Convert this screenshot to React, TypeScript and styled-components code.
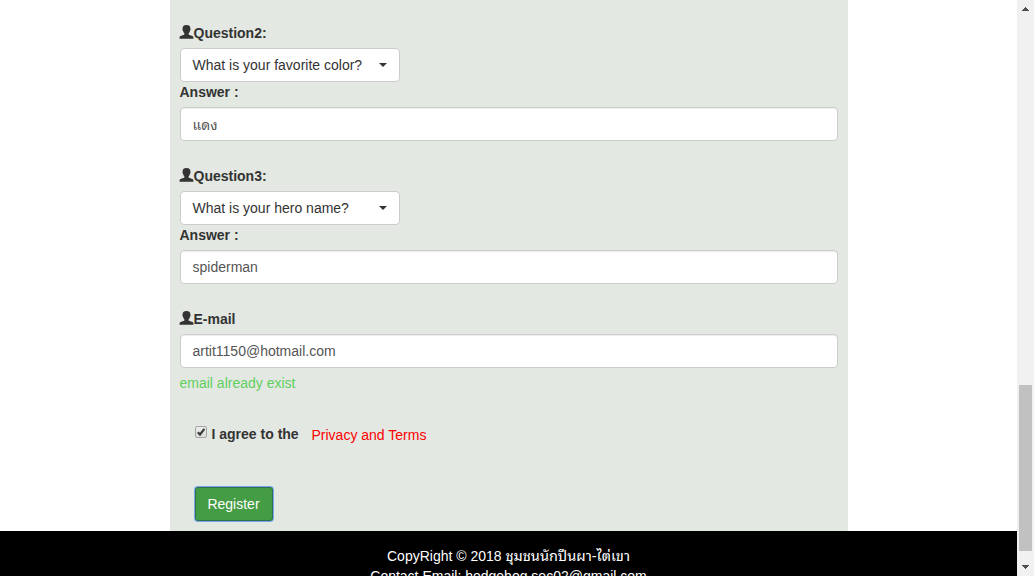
import React from 'react';
import styled, { createGlobalStyle } from 'styled-components';

const GlobalStyle = createGlobalStyle`
  *, *::before, *::after { box-sizing: border-box; }
  html, body { margin: 0; overflow: hidden; background: #fff; }
  body, button, input {
    font-family: "Liberation Sans", Arial, "Noto Sans Thai Looped", Loma, "Noto Sans Thai", "Noto Sans", sans-serif;
    font-size: 14px;
    line-height: 20px;
    color: #333;
  }
`;

const Window = styled.div`
  display: flex;
  width: 1034px;
  height: 576px;
  overflow: hidden;
`;

const Page = styled.div`
  flex: 1;
  min-width: 0;
  display: flex;
  flex-direction: column;
`;

const Panel = styled.form`
  width: 678px;
  height: 531px;
  flex: none;
  margin: 0 0 0 170px;
  padding: 23px 10.5px 10px 9.5px;
  background: #e3e8e2;
`;

const Group = styled.section<{ $gap: number }>`
  display: flex;
  flex-direction: column;
  align-items: flex-start;
  margin-bottom: ${(p) => p.$gap}px;
`;

const Label = styled.label`
  display: flex;
  height: 20px;
  margin-bottom: 5px;
  font-weight: 700;
  white-space: pre;
`;

const UserGlyph = styled.svg`
  width: 15px;
  height: 14px;
  margin: 2px -0.5px 0 -0.5px;
  fill: #333;
`;

const Picker = styled.button`
  display: flex;
  align-items: center;
  justify-content: space-between;
  width: 220px;
  height: 34px;
  padding: 0 12px;
  border: 1px solid #ccc;
  border-radius: 4px;
  background: #fff;
`;

const Caret = styled.span`
  border-top: 4px solid #333;
  border-right: 4px solid transparent;
  border-left: 4px solid transparent;
`;

const Field = styled.input<{ $thai?: boolean }>`
  width: 100%;
  height: 34px;
  padding: ${(p) => (p.$thai ? '5px 12px 7px' : '6px 12px')};
  border: 1px solid #ccc;
  border-radius: 4px;
  outline: 0;
  background: #fff;
  color: #555;
  box-shadow: inset 0 1px 1px rgba(0, 0, 0, 0.075);
`;

const Message = styled.span`
  margin-top: 5px;
  color: #5fcf5f;
`;

const Agreement = styled.div`
  display: flex;
  height: 20px;
  margin: 0 0 43px 15px;
`;

const CheckBox = styled.svg`
  width: 13px;
  height: 13px;
  margin: 2px 4px 0 0;
`;

const AgreeText = styled.strong`
  width: 100px;
`;

const TermsLink = styled.a`
  padding-top: 1px;
  color: #f00;
`;

const Register = styled.button`
  display: block;
  width: 78px;
  height: 34px;
  margin-left: 15px;
  padding: 0;
  border: 1px solid #33704f;
  border-radius: 3px;
  background: #449d44;
  color: #fff;
  box-shadow: 0 0 0 1px #77a7e8;
`;

const Footer = styled.footer`
  flex: 1;
  min-height: 0;
  padding-top: 15px;
  overflow: hidden;
  background: #000;
  color: #fff;
  text-align: center;
`;

const FooterLine = styled.div`
  height: 20px;
  white-space: nowrap;
`;

const ThaiText = styled.span`
  font-size: 14.5px;
`;

const ScrollBar = styled.div`
  display: flex;
  flex-direction: column;
  align-items: center;
  justify-content: space-between;
  width: 17px;
  padding: 7px 0 7px;
  background: #f1f1f1;
`;

const Arrow = styled.svg`
  width: 7px;
  height: 4px;
  fill: #505050;
`;

const Thumb = styled.div`
  width: 13px;
  height: 166px;
  margin: auto 0 14px;
  background: #c1c1c1;
`;

const UserIcon = () => (
  <UserGlyph viewBox="-0.5 0 15 14">
    <path d="M7 0C4.2 0 2.9 1.4 3.2 3.5C2.7 3.9 3 5.4 3.5 5.7C3.7 6.8 4.2 7.7 4.9 8.4V9.4C4.1 10 2.2 10.3 .9 11C.2 11.4 0 12.2 0 13.7H14C14 12.2 13.8 11.4 13.1 11C11.8 10.3 9.9 10 9.1 9.4V8.4C9.8 7.7 10.3 6.8 10.5 5.7C11 5.4 11.3 3.9 10.8 3.5C11.1 1.4 9.8 0 7 0Z" />
  </UserGlyph>
);

type QuestionProps = { title: string; question: string; answer: string; thai?: boolean };

const Question = ({ title, question, answer, thai }: QuestionProps) => (
  <Group $gap={25}>
    <Label><UserIcon />{title}</Label>
    <Picker type="button">{question}<Caret /></Picker>
    <Label>Answer :</Label>
    <Field defaultValue={answer} $thai={thai} />
  </Group>
);

export default function App() {
  return (
    <Window>
      <GlobalStyle />
      <Page>
        <Panel>
          <Question title="Question2:" question="What is your favorite color?" answer="แดง" thai />
          <Question title="Question3:" question="What is your hero name?" answer="spiderman" />
          <Group $gap={31}>
            <Label><UserIcon />E-mail</Label>
            <Field defaultValue="artit1150@hotmail.com" />
            <Message>email already exist</Message>
          </Group>
          <Agreement>
            <CheckBox viewBox="0 0 13 13">
              <defs>
                <linearGradient id="box" x2="0" y2="1">
                  <stop stopColor="#eee" />
                  <stop offset="1" stopColor="#dcdcdc" />
                </linearGradient>
              </defs>
              <rect x=".5" y=".5" width="11" height="11" rx="1.5" fill="url(#box)" stroke="#a3a4a3" />
              <path d="M2.8 6.2L5 8.5L9.4 2.8" fill="none" stroke="#3c3c3c" strokeWidth="2.2" />
            </CheckBox>
            <AgreeText>I agree to the</AgreeText>
            <TermsLink>Privacy and Terms</TermsLink>
          </Agreement>
          <Register type="button">Register</Register>
        </Panel>
        <Footer>
          <FooterLine>CopyRight © 2018 <ThaiText>ชุมชนนักปีนผา-ไต่เขา</ThaiText></FooterLine>
          <FooterLine>Contact Email: hedgehog.sec02@gmail.com</FooterLine>
        </Footer>
      </Page>
      <ScrollBar>
        <Arrow viewBox="0 0 7 4"><path d="M3 0H4V1H5V2H6V3H7V4H0V3H1V2H2V1H3Z" /></Arrow>
        <Thumb />
        <Arrow viewBox="0 0 7 4"><path d="M0 0H7V1H6V2H5V3H4V4H3V3H2V2H1V1H0Z" /></Arrow>
      </ScrollBar>
    </Window>
  );
}
